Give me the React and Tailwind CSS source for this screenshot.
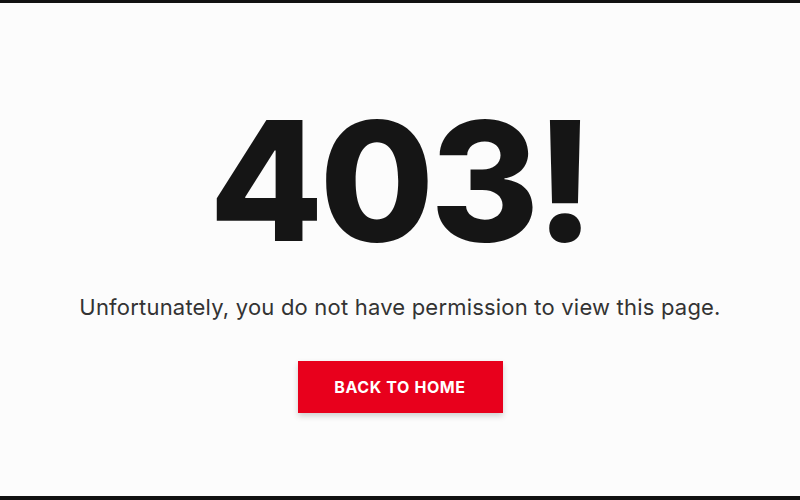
export default function App() {
  return (
    <div className="h-[500px] w-[800px] flex flex-col bg-black">
      {/* thin dark frame top/bottom like the original screenshot */}
      <div className="h-[3px] bg-[#111]" />
      <main className="flex-1 flex flex-col items-center bg-[#fcfcfc] font-['Inter',sans-serif]">
        <h1 className="mt-[88px] text-[166px] leading-[180px] font-extrabold tracking-[-4px] text-[#151515]">
          403!
        </h1>
        <p className="mt-[22px] text-[22px] leading-[28px] tracking-[0.2px] text-[#333]">
          Unfortunately, you do not have permission to view this page.
        </p>
        <button className="mt-[40px] h-[52px] w-[205px] bg-[#e8001c] text-white text-[16px] font-bold tracking-[0.6px] shadow-[0_3px_6px_rgba(0,0,0,0.18)]">
          BACK TO HOME
        </button>
      </main>
      <div className="h-[4px] bg-[#111]" />
    </div>
  );
}
